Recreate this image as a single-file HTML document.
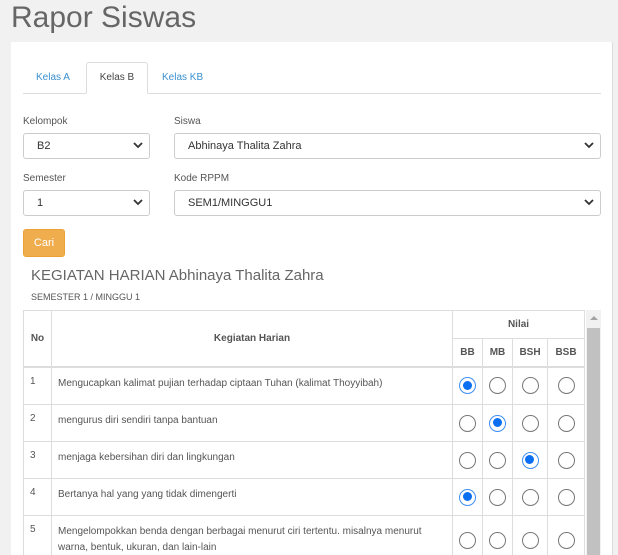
<!DOCTYPE html>
<html><head><style>
*{box-sizing:border-box;margin:0;padding:0}
html,body{width:618px;height:555px;overflow:hidden}
body{background:#f1f1f1;font-family:"Liberation Sans",Arial,sans-serif;color:#555;position:relative}
h1{position:absolute;left:11px;top:1px;font-size:30px;font-weight:normal;color:#666}
.card{position:absolute;left:11px;top:42px;width:602px;height:520px;background:#fff;border-right:1px solid #ddd}
.abs{position:absolute}
.tabs{left:12px;top:51px;width:578px;height:1px;background:#ddd;position:absolute}
.tab{position:absolute;font-size:10px;color:#3a8fd0;top:30px}
.tabact{position:absolute;left:75px;top:20px;width:62px;height:32px;border:1px solid #ddd;border-bottom:1px solid #fff;background:#fff;border-radius:3px 3px 0 0;font-size:10px;color:#444;text-align:center;line-height:30px}
.lbl{position:absolute;font-size:10px;color:#555}
.sel{position:absolute;height:26px;border:1px solid #ccc;border-radius:3px;font-size:11px;color:#333;padding-left:13px;line-height:24px}
.sel svg{position:absolute;right:6px;top:8px}
.btn{position:absolute;left:12px;top:187px;width:42px;height:28px;background:#f0ad4e;border:1px solid #eea236;border-radius:3px;color:#fff;font-size:11px;text-align:center;line-height:26px}
table{position:absolute;left:12px;top:268px;width:562px;border-collapse:collapse;font-size:10px;color:#555}
td,th{border:1px solid #ddd}
th{font-weight:bold;font-size:10px;color:#555}
td.t{padding:8px 6px;vertical-align:top;line-height:16px}
td.n{padding:8px 6px;vertical-align:top}
.r{width:17px;height:17px;border:1px solid #777;border-radius:50%;margin:auto}
.r.on{border:1.5px solid #3d8ff5;padding:2.5px}
.r.on::after{content:"";display:block;width:9px;height:9px;background:#0a6ff0;border-radius:50%}
td.c{text-align:center;vertical-align:middle}
</style></head><body>
<h1>Rapor Siswas</h1>
<div class="card">
<div class="tabs"></div>
<div class="tab" style="left:25px">Kelas A</div>
<div class="tabact">Kelas B</div>
<div class="tab" style="left:151px">Kelas KB</div>
<div class="lbl" style="left:12px;top:74px">Kelompok</div>
<div class="lbl" style="left:163px;top:74px">Siswa</div>
<div class="sel" style="left:12px;top:91px;width:127px">B2<svg width="10" height="7"><path d="M1 1l4 4 4-4" stroke="#333" stroke-width="1.8" fill="none"/></svg></div>
<div class="sel" style="left:163px;top:91px;width:427px">Abhinaya Thalita Zahra<svg width="10" height="7"><path d="M1 1l4 4 4-4" stroke="#333" stroke-width="1.8" fill="none"/></svg></div>
<div class="lbl" style="left:12px;top:131px">Semester</div>
<div class="lbl" style="left:163px;top:131px">Kode RPPM</div>
<div class="sel" style="left:12px;top:148px;width:127px">1<svg width="10" height="7"><path d="M1 1l4 4 4-4" stroke="#333" stroke-width="1.8" fill="none"/></svg></div>
<div class="sel" style="left:163px;top:148px;width:427px">SEM1/MINGGU1<svg width="10" height="7"><path d="M1 1l4 4 4-4" stroke="#333" stroke-width="1.8" fill="none"/></svg></div>
<div class="btn">Cari</div>
<div class="abs" style="left:20px;top:225px;font-size:15px;color:#666">KEGIATAN HARIAN Abhinaya Thalita Zahra</div>
<div class="abs" style="left:20px;top:250px;font-size:9px;color:#555">SEMESTER 1 / MINGGU 1</div>
<table>
<tr style="height:28px"><th rowspan="2" style="width:28px">No</th><th rowspan="2">Kegiatan Harian</th><th colspan="4">Nilai</th></tr>
<tr style="height:28px;border-bottom:2px solid #ddd"><th style="width:30px">BB</th><th style="width:30px">MB</th><th style="width:35px">BSH</th><th style="width:37px">BSB</th></tr>
<tr style="height:38px"><td class="n">1</td><td class="t">Mengucapkan kalimat pujian terhadap ciptaan Tuhan (kalimat Thoyyibah)</td><td class="c"><div class="r on"></div></td><td class="c"><div class="r"></div></td><td class="c"><div class="r"></div></td><td class="c"><div class="r"></div></td></tr>
<tr style="height:37px"><td class="n">2</td><td class="t">mengurus diri sendiri tanpa bantuan</td><td class="c"><div class="r"></div></td><td class="c"><div class="r on"></div></td><td class="c"><div class="r"></div></td><td class="c"><div class="r"></div></td></tr>
<tr style="height:37px"><td class="n">3</td><td class="t">menjaga kebersihan diri dan lingkungan</td><td class="c"><div class="r"></div></td><td class="c"><div class="r"></div></td><td class="c"><div class="r on"></div></td><td class="c"><div class="r"></div></td></tr>
<tr style="height:37px"><td class="n">4</td><td class="t">Bertanya hal yang yang tidak dimengerti</td><td class="c"><div class="r on"></div></td><td class="c"><div class="r"></div></td><td class="c"><div class="r"></div></td><td class="c"><div class="r"></div></td></tr>
<tr style="height:44px"><td class="n">5</td><td class="t">Mengelompokkan benda dengan berbagai menurut ciri tertentu. misalnya menurut warna, bentuk, ukuran, dan lain-lain</td><td class="c"><div class="r"></div></td><td class="c"><div class="r"></div></td><td class="c"><div class="r"></div></td><td class="c"><div class="r"></div></td></tr>
</table>
<div class="abs" style="left:575px;top:268px;width:15px;height:260px;background:#f1f1f1"></div>
<div class="abs" style="left:576px;top:286px;width:13px;height:240px;background:#c1c1c1"></div>
<div class="abs" style="left:579px;top:274px;width:0;height:0;border-left:4px solid transparent;border-right:4px solid transparent;border-bottom:4px solid #a3a3a3"></div>
</div>
</body></html>
